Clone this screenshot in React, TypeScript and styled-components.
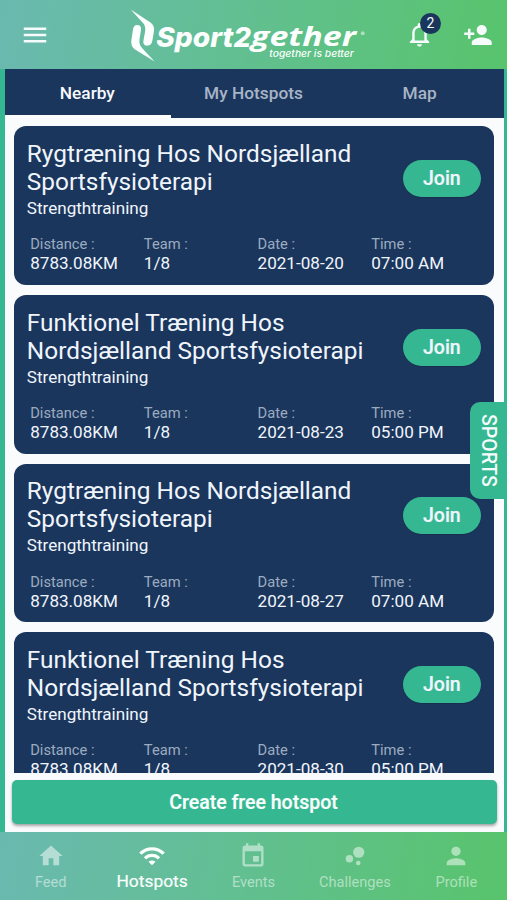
import React from "react";
import styled, { createGlobalStyle } from "styled-components";
import {
  MdMenu,
  MdNotificationsNone,
  MdPersonAdd,
  MdHome,
  MdWifi,
  MdEvent,
  MdBubbleChart,
  MdPerson,
} from "react-icons/md";

const navy = "#1b365d";
const green = "#35b891";
const gradient = "linear-gradient(100deg, #6ab9b0 0%, #62bf92 46%, #58c46c 100%)";

const GlobalStyle = createGlobalStyle`
  * { box-sizing: border-box; }
  body { margin: 0; font-family: Roboto, sans-serif; overflow: hidden; }
  button { font: inherit; border: 0; padding: 0; cursor: pointer; background: none; color: inherit; }
`;

const Screen = styled.div`
  position: relative;
  width: 507px;
  height: 900px;
  display: flex;
  flex-direction: column;
  overflow: hidden;
  background: ${green};
`;

const Header = styled.header`
  height: 69px;
  flex: none;
  display: flex;
  align-items: center;
  padding: 0 14px 0 20px;
  background: ${gradient};
  color: #f5fcfb;
`;

const IconButton = styled.button<{ $ml?: number }>`
  position: relative;
  display: flex;
  margin-left: ${(p) => p.$ml ?? 0}px;
`;

const Logo = styled.svg`
  flex: none;
  margin-left: 75px;
`;

const Badge = styled.span`
  position: absolute;
  left: 15.5px;
  top: -7.5px;
  width: 21px;
  height: 21px;
  border-radius: 50%;
  background: ${navy};
  font-size: 14px;
  line-height: 21px;
  text-align: center;
`;

const Content = styled.main`
  flex: 1;
  min-height: 0;
  display: flex;
  flex-direction: column;
  margin: 0 3.5px 0 5px;
  background: #fafbfc;
`;

const Tabs = styled.nav`
  height: 49px;
  flex: none;
  display: grid;
  grid-template-columns: repeat(3, 1fr);
  background: ${navy};
`;

const Tab = styled.button<{ $active?: boolean }>`
  border-bottom: 3px solid ${(p) => (p.$active ? "#fafbfc" : "transparent")};
  padding: 1px 1.5px 0 0;
  color: ${(p) => (p.$active ? "#f7faff" : "#a7b4c6")};
  font-size: 17.3px;
  font-weight: 500;
`;

const List = styled.section`
  height: 655px;
  flex: none;
  display: flex;
  flex-direction: column;
  gap: 10px;
  padding: 8.4px 10px 0 9.4px;
  overflow: hidden;
`;

const Card = styled.article`
  height: 158.6px;
  flex: none;
  border-radius: 12px;
  padding: 13.8px 12.4px 0;
  background: ${navy};
  color: #f0f5fc;
`;

const CardTop = styled.div`
  display: flex;
  justify-content: space-between;
  align-items: flex-start;
`;

const Title = styled.h2`
  margin: 0;
  font-size: 24.4px;
  line-height: 28px;
  font-weight: 400;
  letter-spacing: 0.02px;
  white-space: pre-line;
`;

const Sport = styled.p`
  margin: 2px 0 0;
  font-size: 17.1px;
  line-height: 20px;
`;

const JoinButton = styled.button`
  width: 78.5px;
  height: 37px;
  flex: none;
  margin-top: 19.8px;
  border-radius: 19px;
  background: ${green};
  box-shadow: 0 1px 1px rgba(0, 0, 0, 0.15);
  font-size: 19.5px;
  font-weight: 500;
  -webkit-text-stroke: 0.2px currentColor;
`;

const Facts = styled.dl`
  display: grid;
  grid-template-columns: repeat(4, 113.7px);
  margin: 17.3px 0 0 3.4px;
`;

const Fact = styled.div`
  white-space: nowrap;
`;

const FactLabel = styled.dt`
  font-size: 14.7px;
  line-height: 18px;
  color: #9cacc0;
`;

const FactValue = styled.dd`
  margin: 0;
  font-size: 17.1px;
  line-height: 20px;
`;

const CreateButton = styled.button`
  height: 44px;
  flex: none;
  margin: 7px 7px 0;
  padding-right: 1.5px;
  border-radius: 5px;
  background: ${green};
  box-shadow: 0 2px 3px rgba(0, 0, 0, 0.35);
  color: #fafffd;
  font-size: 19.5px;
  font-weight: 500;
  -webkit-text-stroke: 0.2px currentColor;
`;

const SportsTab = styled.button`
  position: absolute;
  right: 0;
  top: 402px;
  width: 37px;
  height: 97px;
  border-radius: 10px 0 0 10px;
  background: ${green};
  color: #f5fcfb;
  font-size: 19.5px;
  font-weight: 500;
  writing-mode: vertical-rl;
  line-height: 37px;
`;

const BottomNav = styled.nav`
  height: 68px;
  flex: none;
  display: grid;
  grid-template-columns: repeat(5, 1fr);
  background: ${gradient};
`;

const NavItem = styled.button<{ $active?: boolean }>`
  display: flex;
  flex-direction: column;
  align-items: center;
  padding-top: 10px;
  color: ${(p) => (p.$active ? "#fafffd" : "rgba(255, 255, 255, 0.5)")};
`;

const NavLabel = styled.span<{ $active?: boolean }>`
  font-size: ${(p) => (p.$active ? 17.4 : 14.6)}px;
  line-height: 20px;
  margin-top: ${(p) => (p.$active ? 0.6 : 2)}px;
  -webkit-text-stroke: ${(p) => (p.$active ? "0.2px" : "0")} currentColor;
`;

const RYG = "Rygtræning Hos Nordsjælland\nSportsfysioterapi";
const FUNK = "Funktionel Træning Hos\nNordsjælland Sportsfysioterapi";

const hotspots = [
  { title: RYG, date: "2021-08-20", time: "07:00 AM" },
  { title: FUNK, date: "2021-08-23", time: "05:00 PM" },
  { title: RYG, date: "2021-08-27", time: "07:00 AM" },
  { title: FUNK, date: "2021-08-30", time: "05:00 PM" },
];

const navItems = [
  { label: "Feed", Icon: MdHome },
  { label: "Hotspots", Icon: MdWifi, active: true },
  { label: "Events", Icon: MdEvent },
  { label: "Challenges", Icon: MdBubbleChart },
  { label: "Profile", Icon: MdPerson },
];

function Brand() {
  return (
    <Logo width="245" height="69" viewBox="125 0 245 69" fill="#fcfffe">
      <path d="M130.7 9.6 L150.5 22.5 Q154.8 25.7 154 31 L152.4 40.5 Q151.5 45.8 146.8 45.7 Q142.8 45.5 143.4 40.8 L145.2 31 Q146 25.8 142.3 22.3 Z" />
      <path d="M137 25 Q141.6 25 141 29.8 L139.5 39.5 Q138.7 44.5 142.2 48.3 L154.6 61.6 L135 49.5 Q130.6 46.5 131.3 40.8 L132.9 30 Q133.5 25 137 25 Z" />
      <text x="156.3" y="46.5" fontFamily="Inter" fontSize="27" fontWeight="800" fontStyle="italic" textLength="77" lengthAdjust="spacingAndGlyphs">Sport</text>
      <text x="233.4" y="46.5" fontFamily="Inter" fontSize="27" fontWeight="800" fontStyle="italic" textLength="17.5" lengthAdjust="spacingAndGlyphs">2</text>
      <text x="251" y="46.3" fontFamily="Open Sans" fontSize="27.5" fontWeight="700" fontStyle="italic" textLength="105" lengthAdjust="spacingAndGlyphs">gether</text>
      <text x="269.3" y="56.6" fontFamily="Inter" fontSize="9.4" fontWeight="500" fontStyle="italic" textLength="84.5" lengthAdjust="spacingAndGlyphs">together is better</text>
      <circle cx="362.7" cy="33.2" r="2" opacity="0.5" />
    </Logo>
  );
}

function FactItem({ label, value }: { label: string; value: string }) {
  return (
    <Fact>
      <FactLabel>{label} :</FactLabel>
      <FactValue>{value}</FactValue>
    </Fact>
  );
}

export default function App() {
  return (
    <>
      <GlobalStyle />
      <Screen>
        <Header>
          <IconButton aria-label="Menu">
            <MdMenu size={30} />
          </IconButton>
          <Brand />
          <IconButton aria-label="Notifications" $ml={34.5}>
            <MdNotificationsNone size={29} />
            <Badge>2</Badge>
          </IconButton>
          <IconButton aria-label="Add friend" $ml={29}>
            <MdPersonAdd size={30} />
          </IconButton>
        </Header>
        <Content>
          <Tabs>
            <Tab $active>Nearby</Tab>
            <Tab>My Hotspots</Tab>
            <Tab>Map</Tab>
          </Tabs>
          <List>
            {hotspots.map((h) => (
              <Card key={h.date}>
                <CardTop>
                  <div>
                    <Title>{h.title}</Title>
                    <Sport>Strengthtraining</Sport>
                  </div>
                  <JoinButton>Join</JoinButton>
                </CardTop>
                <Facts>
                  <FactItem label="Distance" value="8783.08KM" />
                  <FactItem label="Team" value="1/8" />
                  <FactItem label="Date" value={h.date} />
                  <FactItem label="Time" value={h.time} />
                </Facts>
              </Card>
            ))}
          </List>
          <CreateButton>Create free hotspot</CreateButton>
        </Content>
        <BottomNav>
          {navItems.map(({ label, Icon, active }) => (
            <NavItem key={label} $active={active}>
              <Icon size={28} />
              <NavLabel $active={active}>{label}</NavLabel>
            </NavItem>
          ))}
        </BottomNav>
        <SportsTab>SPORTS</SportsTab>
      </Screen>
    </>
  );
}
